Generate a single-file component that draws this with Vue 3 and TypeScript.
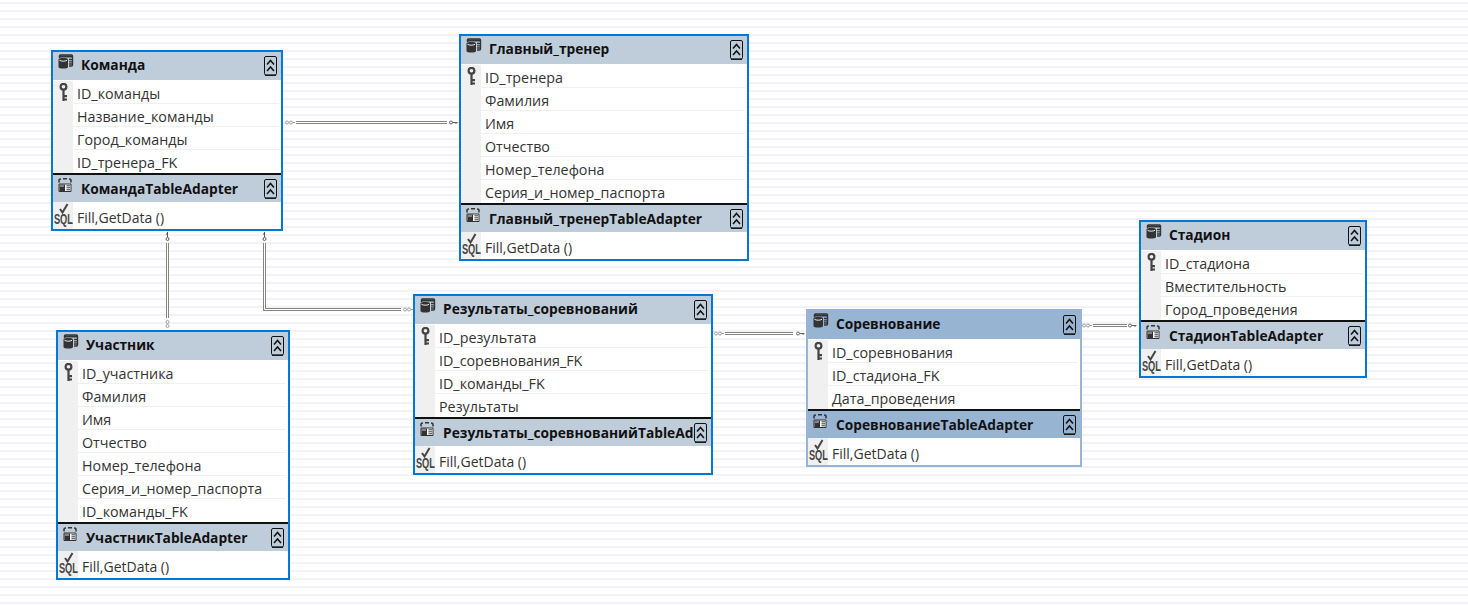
<script setup lang="ts">
interface Node {
  name: string
  adapter: string
  x: number
  y: number
  w: number
  h: number
  fields: string[]
  muted?: boolean
}

const nodes: Node[] = [
  { name: 'Команда', adapter: 'КомандаTableAdapter', x: 51, y: 50, w: 232, h: 181, fields: ['ID_команды', 'Название_команды', 'Город_команды', 'ID_тренера_FK'] },
  { name: 'Главный_тренер', adapter: 'Главный_тренерTableAdapter', x: 459, y: 34, w: 290, h: 227, fields: ['ID_тренера', 'Фамилия', 'Имя', 'Отчество', 'Номер_телефона', 'Серия_и_номер_паспорта'] },
  { name: 'Участник', adapter: 'УчастникTableAdapter', x: 56, y: 330, w: 234, h: 250, fields: ['ID_участника', 'Фамилия', 'Имя', 'Отчество', 'Номер_телефона', 'Серия_и_номер_паспорта', 'ID_команды_FK'] },
  { name: 'Результаты_соревнований', adapter: 'Результаты_соревнованийTableAdapter', x: 413, y: 294, w: 300, h: 181, fields: ['ID_результата', 'ID_соревнования_FK', 'ID_команды_FK', 'Результаты'] },
  { name: 'Соревнование', adapter: 'СоревнованиеTableAdapter', x: 806, y: 309, w: 276, h: 158, fields: ['ID_соревнования', 'ID_стадиона_FK', 'Дата_проведения'], muted: true },
  { name: 'Стадион', adapter: 'СтадионTableAdapter', x: 1139, y: 220, w: 228, h: 158, fields: ['ID_стадиона', 'Вместительность', 'Город_проведения'] },
]

const box = (n: Node) => ({ left: `${n.x}px`, top: `${n.y}px`, width: `${n.w}px`, height: `${n.h}px` })

const links = [
  'M296 122.5H447',
  'M167.5 243V318',
  'M264.5 243V309.5H401',
  'M725 333.5H793',
  'M1093 325.5H1127',
]
const infEnds: [number, number][] = [
  [285, 122], [403, 309], [714, 333], [1082, 325],
]
const keyEnds: [number, number][] = [[449, 122], [796, 333], [1128, 325]]
</script>

<template>
  <div class="canvas">
    <svg class="wires" width="1468" height="605" viewBox="0 0 1468 605" fill="none">
      <g v-for="d in links" :key="d">
        <path :d="d" stroke="#85857d" stroke-width="3" />
        <path :d="d" stroke="#ffffff" stroke-width="1" />
      </g>
      <g v-for="[x, y] in infEnds" :key="`i${x}`" stroke="#a0a09c" stroke-width="1">
        <circle :cx="x + 2" :cy="y + 0.5" r="1.5" />
        <circle :cx="x + 6" :cy="y + 0.5" r="1.5" />
        <path :d="`M${x + 8} ${y + 0.5}h2`" />
      </g>
      <g v-for="[x, y] in keyEnds" :key="`k${x}`" stroke="#66665f" stroke-width="1">
        <circle :cx="x + 2" :cy="y + 0.5" r="1.5" />
        <path :d="`M${x + 3.5} ${y + 0.5}h5 M${x + 7} ${y + 0.5}v1.5`" />
      </g>
      <g stroke="#555550" stroke-width="1">
        <circle cx="167.5" cy="239" r="1.5" />
        <path d="M167.5 232v5 M167.5 234h-1.5" />
        <circle cx="264.5" cy="239" r="1.5" />
        <path d="M264.5 232v5 M264.5 234h-1.5" />
      </g>
      <g stroke="#a0a09c" stroke-width="1">
        <circle cx="167.5" cy="322" r="1.5" />
        <circle cx="167.5" cy="326" r="1.5" />
      </g>
    </svg>

    <section v-for="n in nodes" :key="n.name" class="card" :class="{ muted: n.muted }" :style="box(n)">
      <header class="head">
        <svg class="ico" width="16" height="15" viewBox="0 0 16 15">
          <path d="M1.5 4V2a1 1 0 0 1 1-1h11a1 1 0 0 1 1 1v9a1 1 0 0 1-1 1H11" fill="none" stroke="#333" stroke-width="1.4" />
          <path d="M1.5 1.5h13v2h-13z" fill="#333" />
          <path d="M11 5.5h3M11 7.8h3M11 10h3" stroke="#333" stroke-width="1.3" />
          <path d="M0.5 5.5C0.5 3.6 10 3.6 10 5.5V13c0 2-9.5 2-9.5 0z" fill="#333" />
          <path d="M1.5 6.3c2 1.2 5.5 1.2 7.5 0" fill="none" stroke="#fff" stroke-width="0.9" />
        </svg>
        <span class="title">{{ n.name }}</span>
        <svg class="chev" width="13" height="20" viewBox="0 0 13 20">
          <rect x="0.5" y="0.5" width="12" height="18.5" rx="1.5" fill="none" stroke="#111" />
          <path d="M1 19.3h11" stroke="#111" stroke-width="1.2" />
          <path d="M3 8.5 6.5 4.5 10 8.5M3 15 6.5 11 10 15" fill="none" stroke="#111" stroke-width="1.5" />
        </svg>
      </header>
      <ul class="rows">
        <li v-for="(f, i) in n.fields" :key="f" class="row">
          <div class="gutter">
            <svg v-if="i === 0" class="key" width="9" height="18" viewBox="0 0 9 18">
              <circle cx="4.5" cy="3.8" r="2.9" fill="none" stroke="#444" stroke-width="2.2" />
              <path d="M4.5 7v11M4.5 13.2h3.5M4.5 16.5h3.5" stroke="#444" stroke-width="2.2" fill="none" />
            </svg>
          </div>
          <span class="label">{{ f }}</span>
        </li>
      </ul>
      <header class="head adapter">
        <svg class="ico small" width="14" height="14" viewBox="0 0 14 14">
          <path d="M1 4.5V2.5C1 1.5 2 1 3 1M5 0.8h4M11 1c1 0 2 .5 2 1.5v2" fill="none" stroke="#333" stroke-width="1.5" />
          <path d="M1 6h12v7.5H1z" fill="#fff" stroke="#333" />
          <path d="M1.5 6.5h5.5V13.5H1.5z" fill="#333" />
          <path d="M2 8h4" stroke="#fff" stroke-width="0.8" />
          <path d="M8.5 7.8h3.5M8.5 9.8h3.5M8.5 11.8h3.5" stroke="#333" />
        </svg>
        <span class="title clip">{{ n.adapter }}</span>
        <svg class="chev" width="13" height="20" viewBox="0 0 13 20">
          <rect x="0.5" y="0.5" width="12" height="18.5" rx="1.5" fill="none" stroke="#111" />
          <path d="M1 19.3h11" stroke="#111" stroke-width="1.2" />
          <path d="M3 8.5 6.5 4.5 10 8.5M3 15 6.5 11 10 15" fill="none" stroke="#111" stroke-width="1.5" />
        </svg>
      </header>
      <div class="row query">
        <div class="gutter sql">
          <svg width="10" height="11" viewBox="0 0 10 11" class="tick">
            <path d="M1 6l2.5 3.5L8.5 1" fill="none" stroke="#444" stroke-width="2" />
          </svg>
          <span class="sqltext">SQL</span>
        </div>
        <span class="label">Fill,GetData ()</span>
      </div>
    </section>
  </div>
</template>

<style scoped>
.canvas {
  position: relative;
  width: 1468px;
  height: 605px;
  overflow: hidden;
  background: repeating-linear-gradient(to bottom, #ffffff 0, #ffffff 2px, #f2f2f8 2px, #f2f2f8 4px, #ffffff 4px, #ffffff 8px);
  font-family: "Segoe UI", "Open Sans", "Noto Sans", sans-serif;
}
.wires {
  position: absolute;
  left: 0;
  top: 0;
}
.card {
  position: absolute;
  box-sizing: border-box;
  display: flex;
  flex-direction: column;
  border: 2px solid #0078d7;
  background: #fff;
}
.card.muted {
  border-color: #97b4d4;
}
.head {
  display: flex;
  align-items: center;
  height: 28px;
  flex: none;
  background: #bfcddb;
  padding: 0 4px 0 5px;
  box-sizing: border-box;
}
.muted .head {
  background: #98b4d3;
}
.adapter {
  border-top: 2px solid #111;
  height: 29px;
}
.ico {
  flex: none;
  align-self: flex-start;
  margin-top: 2px;
  margin-right: 7px;
}
.ico.small {
  margin-top: 3px;
  margin-right: 9px;
}
.title {
  flex: 1;
  min-width: 0;
  font-size: 13.75px;
  font-weight: 700;
  color: #111;
  white-space: nowrap;
  overflow: hidden;
  padding-bottom: 3px;
}
.adapter .title {
  padding-bottom: 1px;
}
.rows {
  list-style: none;
  margin: 0;
  padding: 1px 2px 0 0;
  flex: 1;
  min-height: 0;
}
.chev {
  flex: none;
}
.row {
  display: flex;
  height: 23px;
  box-sizing: border-box;
  border-bottom: 1px solid #f0f0f0;
}
.rows .row:last-child {
  border-bottom: none;
}
.gutter {
  position: relative;
  flex: none;
  width: 20px;
  background: #f0f0f0;
}
.key {
  position: absolute;
  left: 6px;
  top: 2px;
}
.label {
  padding-left: 4px;
  padding-top: 2px;
  font-size: 14.3px;
  line-height: 22px;
  color: #333;
  white-space: nowrap;
}
.query {
  flex: none;
  height: 27px;
  margin-right: 2px;
  border-bottom: none;
  align-items: stretch;
}
.query .label {
  font-size: 14px;
  padding-top: 4px;
  line-height: 24px;
}
.sql {
  display: flex;
  flex-direction: column;
  align-items: center;
  overflow: hidden;
}
.tick {
  flex: none;
  margin-top: 1px;
  margin-left: 2px;
}
.sqltext {
  flex: none;
  font-size: 14px;
  font-weight: 700;
  line-height: 12px;
  margin-top: -1px;
  color: #444;
  font-family: "Liberation Sans", sans-serif;
  transform: scaleX(0.66);
}
</style>
